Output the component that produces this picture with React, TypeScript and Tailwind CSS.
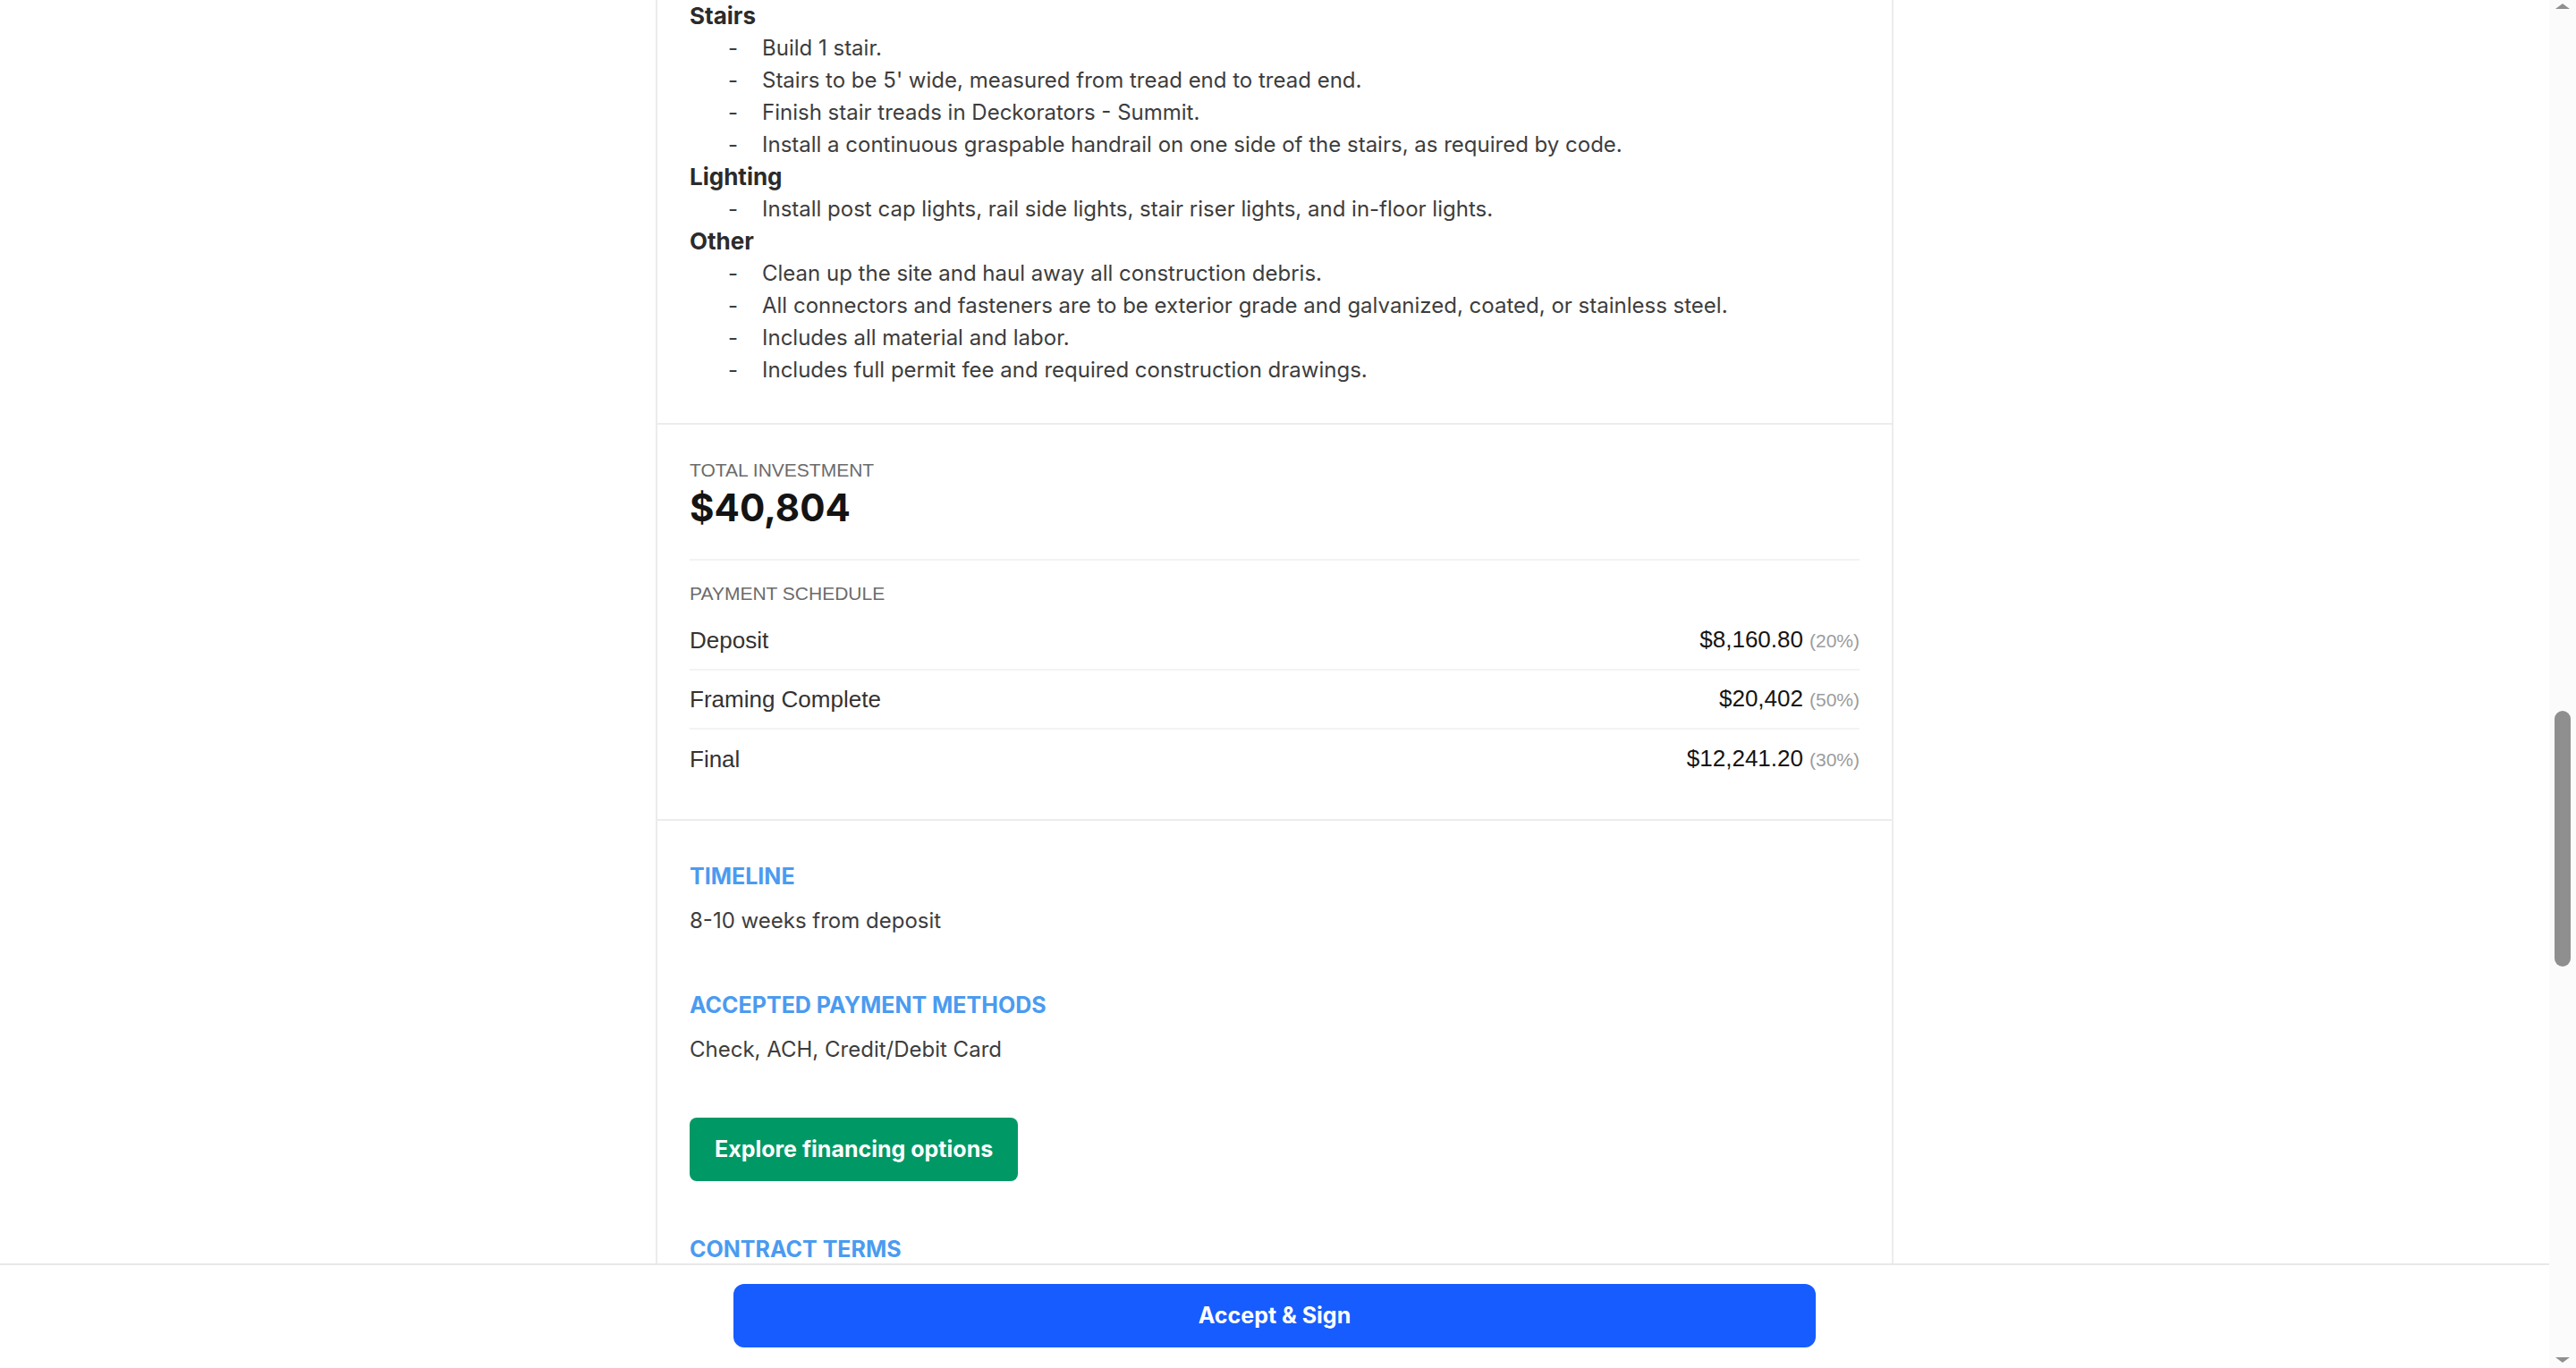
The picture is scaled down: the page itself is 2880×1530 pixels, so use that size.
const scope = [
	{
		title: 'Stairs',
		items: [
			'Build 1 stair.',
			"Stairs to be 5' wide, measured from tread end to tread end.",
			'Finish stair treads in Deckorators - Summit.',
			'Install a continuous graspable handrail on one side of the stairs, as required by code.'
		]
	},
	{
		title: 'Lighting',
		items: ['Install post cap lights, rail side lights, stair riser lights, and in-floor lights.']
	},
	{
		title: 'Other',
		items: [
			'Clean up the site and haul away all construction debris.',
			'All connectors and fasteners are to be exterior grade and galvanized, coated, or stainless steel.',
			'Includes all material and labor.',
			'Includes full permit fee and required construction drawings.'
		]
	}
]

const payments = [
	{ label: 'Deposit', amount: '$8,160.80', pct: '(20%)' },
	{ label: 'Framing Complete', amount: '$20,402', pct: '(50%)' },
	{ label: 'Final', amount: '$12,241.20', pct: '(30%)' }
]

const inter = "font-['Inter',sans-serif]"
const arial = "font-['Liberation_Sans',Arial,sans-serif]"

function ScopeList() {
	return (
		<div className="border-b-2 border-[#ececec] px-[36px] pb-[41px]">
			{scope.map((group) => (
				<div key={group.title}>
					<p className="text-[26px] leading-[36px] font-bold text-[#2b2b2b]">{group.title}</p>
					{group.items.map((item) => (
						<div key={item} className="ml-[43px] flex text-[24px] leading-[36px] text-[#3d3d3d]">
							<span className="w-[38px] shrink-0">-</span>
							<span>{item}</span>
						</div>
					))}
				</div>
			))}
		</div>
	)
}

function Investment() {
	return (
		<div className={`border-b-2 border-[#ececec] px-[36px] pt-[37px] pb-[34px] ${arial}`}>
			<p className="text-[21px] leading-[28px] text-[#6b6b6b]">TOTAL INVESTMENT</p>
			<p className={`mt-[3px] text-[42px] leading-[50px] font-bold text-[#141414] ${inter}`}>$40,804</p>
			<div className="mt-[32px] border-t-2 border-[#f3f3f3] pt-[23px]">
				<p className="text-[21px] leading-[28px] text-[#6b6b6b]">PAYMENT SCHEDULE</p>
				<div className="mt-[6px]">
					{payments.map((p, i) => (
						<div
							key={p.label}
							className={`flex h-[66px] items-center justify-between ${i < payments.length - 1 ? 'border-b-2 border-[#f3f3f3]' : ''}`}
						>
							<span className="text-[26px] leading-[32px] text-[#333333]">{p.label}</span>
							<span className="flex items-baseline gap-[7px] leading-[32px]">
								<span className="text-[26px] text-[#141414]">{p.amount}</span>
								<span className="text-[21px] text-[#9c9c9c]">{p.pct}</span>
							</span>
						</div>
					))}
				</div>
			</div>
		</div>
	)
}

function InfoBlock({ title, value }: { title: string; value: string }) {
	return (
		<div className="mb-[60px]">
			<p className="text-[25px] leading-[32px] font-bold text-[#4b9bf0]">{title}</p>
			<p className="mt-[16px] text-[24px] leading-[36px] text-[#3d3d3d]">{value}</p>
		</div>
	)
}

function Scrollbar() {
	return (
		<div className="flex w-[30px] shrink-0 flex-col items-center bg-[#fbfbfb]">
			<svg width="18" height="10" viewBox="0 0 18 10" className="mt-[2px]">
				<path d="M1 8 L9 2 L17 8 Z" fill="#8f8f8f" />
			</svg>
			<div className="mt-[783px] h-[286px] w-[18px] rounded-full bg-[#8f8f8f]" />
			<div className="flex-1" />
			<svg width="18" height="10" viewBox="0 0 18 10" className="mb-[4px]">
				<path d="M1 2 L9 8 L17 2 Z" fill="#8f8f8f" />
			</svg>
		</div>
	)
}

export default function App() {
	return (
		<div className={`flex h-[1530px] w-full overflow-hidden bg-white ${inter}`}>
			<div className="flex min-w-0 flex-1 flex-col">
				<div className="min-h-0 flex-1 overflow-hidden">
					<div className="mx-auto w-[1384px] border-x-2 border-[#ececec]">
						<ScopeList />
						<Investment />
						<div className="px-[36px] pt-[46px]">
							<InfoBlock title="TIMELINE" value="8-10 weeks from deposit" />
							<InfoBlock title="ACCEPTED PAYMENT METHODS" value="Check, ACH, Credit/Debit Card" />
							<button className="-mt-[2px] h-[71px] rounded-[8px] bg-[#009966] px-[28px] text-[25px] font-bold text-white">
								Explore financing options
							</button>
							<p className="mt-[60px] text-[25px] leading-[32px] font-bold text-[#4b9bf0]">CONTRACT TERMS</p>
							<div className="h-[200px]" />
						</div>
					</div>
				</div>
				<div className="h-[117px] shrink-0 border-t-2 border-[#e8e8e8] bg-white pt-[21px]">
					<button className="mx-auto block h-[71px] w-[1210px] rounded-[12px] bg-[#175cff] text-[25px] font-bold text-white">
						Accept &amp; Sign
					</button>
				</div>
			</div>
			<Scrollbar />
		</div>
	)
}
